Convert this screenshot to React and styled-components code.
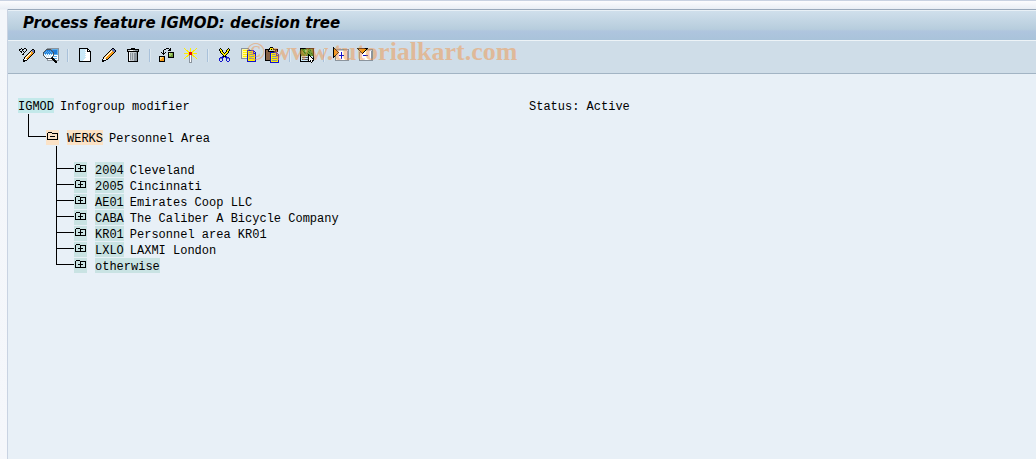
import React, { useState } from 'react';
import styled, { createGlobalStyle } from 'styled-components';

const GlobalStyle = createGlobalStyle`
  * {
    box-sizing: border-box;
  }

  body {
    margin: 0;
    background: #f5f7fb;
  }
`;

const Page = styled.div`
  min-height: 100vh;
  display: flex;
  flex-direction: column;
  padding: 8px 0 0 7px;
  border-top: 1px solid #c9d2e2;
  background: linear-gradient(#fcfcfe, #e9eef5 8px, #f3f6fa 9px, #f5f7fb);
`;

const Window = styled.main`
  flex: 1;
  display: flex;
  flex-direction: column;
  border-left: 1px solid #c9d3e2;
  background: #e8f0f7;
`;

const TitleBar = styled.header`
  height: 32px;
  padding: 0 15px;
  border-top: 1px solid #9aa9bb;
  border-bottom: 1px solid #edf3f7;
  box-shadow: inset 0 1px 0 #e8f0f6;
  background: linear-gradient(#d1e0ec, #b7cddd 64%, #afc5de 70%, #a9c3da);
`;

const Title = styled.h1`
  margin: 0;
  font-family: 'DejaVu Sans', sans-serif;
  font-size: 15px;
  font-style: italic;
  font-weight: 700;
  line-height: 27px;
  color: #000;
`;

const Toolbar = styled.div`
  position: relative;
  display: flex;
  align-items: center;
  height: 33px;
  padding: 0 7px 4px;
  border-bottom: 1px solid #a2b4c4;
  background: #cfdde8;
`;

const ToolButton = styled.button`
  width: 24px;
  height: 24px;
  padding: 4px;
  border: 0;
  background: none;
  cursor: pointer;

  &:hover {
    background: #dfeaf2;
  }
`;

const Separator = styled.span`
  width: 2px;
  height: 13px;
  margin: 0 4px;
  border-left: 1px solid #a9c1da;
  border-right: 1px solid #dde8f0;
`;

const Watermark = styled.span`
  position: absolute;
  top: -4px;
  left: 238px;
  font-family: 'Liberation Serif', serif;
  font-size: 26px;
  font-weight: 700;
  line-height: 30px;
  color: rgba(240, 150, 75, 0.5);
  pointer-events: none;
  white-space: nowrap;
`;

const Icon = styled.svg`
  display: block;
  width: 16px;
  height: 16px;
  shape-rendering: crispEdges;
`;

const Content = styled.section`
  padding: 24px 10px;
  font-family: 'Liberation Mono', monospace;
  font-size: 12px;
  line-height: 18px;
  color: #000;
`;

const Heading = styled.div`
  display: grid;
  grid-template-columns: minmax(200px, 511px) auto;
  justify-content: start;
  height: 16px;
`;

const Row = styled.div`
  display: flex;
  height: 16px;
  padding-left: ${props => props.$indent || 0}px;
  white-space: nowrap;
`;

const tones = {
  cyan: '#c3e9ea',
  peach: '#fbe2c6',
  green: '#c9e3e3',
};

const Tag = styled.span`
  height: 15px;
  margin-right: 6px;
  background: ${props => tones[props.$tone]};
`;

const FolderButton = styled.button`
  width: 13px;
  height: 15px;
  margin-right: 8px;
  padding: 0;
  border: 0;
  background: ${props => tones[props.$tone]};
  cursor: pointer;
`;

const FolderIcon = styled.svg`
  display: block;
  width: 13px;
  height: 15px;
  shape-rendering: crispEdges;
`;

const Stem = styled.div`
  height: 16px;
  margin-left: ${props => props.$indent}px;
  border-left: 1px solid #000;
`;

const Branch = styled.span`
  width: 18px;

  &::before {
    content: '';
    display: block;
    height: 6px;
    border-left: 1px solid #000;
    border-bottom: 1px solid #000;
  }

  &::after {
    content: '';
    display: block;
    height: 10px;
    border-left: 1px solid ${props => (props.$last ? 'transparent' : '#000')};
  }
`;

const palette = {
  K: '#000000',
  W: '#ffffff',
  G: '#8b949d',
  g: '#c3c9ce',
  D: '#4b5259',
  O: '#f59a16',
  o: '#ffd27a',
  Y: '#ffef00',
  y: '#fff9a0',
  R: '#e80c0c',
  B: '#1111cc',
  b: '#5dade9',
  S: '#1e7bd8',
  P: '#6b75b0',
  p: '#c9e8f8',
  E: '#6f9838',
  e: '#a5cc6b',
  F: '#447d14',
  M: '#866044',
};

const icons = {
  change: [
    '................',
    '..K..KK.........',
    'KK.KK..K.....KK.',
    'K..K...K....KPPK',
    '.KK.K.K....KoPPK',
    '..K..K....KoOOPK',
    '....K....KoWOOK.',
    '...KK...KoWOOK..',
    '.......KoWOOK...',
    '......KoWOOK....',
    '.....KoWOOK.....',
    '.....KWOOK......',
    '....KWWWK.......',
    '....KKKK........',
    '....KK..........',
    '................',
  ],
  find: [
    '................',
    '....GGGGGGGGGGGG',
    '...DDDDDGbbbbbbG',
    '..DSSSSSDSSSSSbG',
    '.DSbSbSbSDSSSSbG',
    'DSbSbSbSbSDSSSbG',
    'DbSbSbSbSbDSSSbG',
    'DWbWbWbWbWDbbbbG',
    'DpWpWpWpWWDWWWWG',
    '.DWpWpWpWDbbbbWG',
    '..DWWWWWDKWWWWWG',
    '...DDDDDKKKbbbWG',
    '....GWWWWKKKWWWG',
    '....GGGGGGKKKGGG',
    '...........KKK..',
    '............KK..',
  ],
  create: [
    '................',
    '..KKKKKKKKK.....',
    '..KppppppWKK....',
    '..KpppppWWKWK...',
    '..KppppppWKKKK..',
    '..KpppppWWWWWK..',
    '..KppppppWWWWK..',
    '..KpppppWWWWWK..',
    '..KppppppWWWWK..',
    '..KpppppWWWWWK..',
    '..KppppppWWWWK..',
    '..KpppppWWWWWK..',
    '..KppppWWWWWWK..',
    '..KpppWWWWWWWK..',
    '..KKKKKKKKKKKK..',
    '................',
  ],
  edit: [
    '................',
    '...........KK...',
    '..........KPPK..',
    '.........KoPPPK.',
    '........KoWOPPK.',
    '.......KoWOOOK..',
    '......KoWOOOK...',
    '.....KoWOOOK....',
    '....KoWOOOK.....',
    '...KoWOOOK......',
    '..KoWOOOK.......',
    '..KWoOOK........',
    '.KWWWKK.........',
    '.KKKK...........',
    '.KK.............',
    '................',
  ],
  remove: [
    '................',
    '......KKKK......',
    '..KKKKKKKKKKKK..',
    '..KggWWWggGGGK..',
    '..KKKKKKKKKKKK..',
    '...KWggggggGK...',
    '...KWGgGgGGGK...',
    '...KWGgGgGGGK...',
    '...KWGgGgGGGK...',
    '...KWGgGgGGGK...',
    '...KWGgGgGGGK...',
    '...KWGgGgGGGK...',
    '...KWGgGgGGGK...',
    '...KWggggGGGK...',
    '...KKKKKKKKKK...',
    '................',
  ],
  transfer: [
    '................',
    '.......KKK.K....',
    '.....KK...KK....',
    '....K....KKK....',
    '....K...........',
    '..K.K.K..KKKKKK.',
    '...KKK...KyeeEK.',
    '....K....KeeeEK.',
    '.........KeeEEK.',
    'KKKKKK...KEEEEK.',
    'KyooOK...KKKKKK.',
    'KooOOK..........',
    'KoOOOK..........',
    'KOOOOK..........',
    'KKKKKK..........',
    '................',
  ],
  activate: [
    '................',
    '.Y.....Y.....Y..',
    '..Y....Y....Y...',
    '...YY..Y..YY....',
    '....YY.Y.YY.....',
    '.....YRRRY......',
    '.YYYYYRRRYYYYY..',
    '.....YRRRY......',
    '....YYGWGYY.....',
    '...YY.GWG.YY....',
    '..Y...GWG...Y...',
    '.Y....GWG....Y..',
    '......GWG.......',
    '......GWG.......',
    '......GWG.......',
    '......GGG.......',
  ],
  cut: [
    '................',
    '...K.......K....',
    '..KYK.....KYK...',
    '..KYYK...KYYK...',
    '...KYK...KYK....',
    '...KYYK.KYYK....',
    '....KYYKYYK.....',
    '.....KYYYK......',
    '......KYK.......',
    '.....BKKKB......',
    '...BBBB.BBBB....',
    '..BPPB...BPPB...',
    '..B..B...B..B...',
    '..B..B...B..B...',
    '...BB.....BB....',
    '................',
  ],
  copy: [
    '................',
    'GGGGGGGG........',
    'GyyyyyyGG.......',
    'GyYYYYBBBBBBB...',
    'GyyyyyBYYYYYBB..',
    'GyYYYYBYGGGYBYB.',
    'GyyyyyBYYYYYBBB.',
    'GyYYYYBYGGGGGYB.',
    'GyyyyyBYYYYYYYB.',
    'GyYYYYBYGGGGGYB.',
    'GyyyyyBYYYYYYYB.',
    'GGGGGGBYGGGGGYB.',
    '......BYYYYYYYB.',
    '......BYYYYYYYB.',
    '......BBBBBBBBB.',
    '................',
  ],
  paste: [
    '.....KKK........',
    '....KYYYK.......',
    'KKKKKYKYKKKKK...',
    'KMMKggggggKMK...',
    'KMMKKKKKKKKMK...',
    'KMMMMBBBBBBB....',
    'KMMMMBYYYYYBB...',
    'KMMMMBYGGGYBYB..',
    'KMMMMBYYYYYBBB..',
    'KMMMMBYGGGGGYB..',
    'KMMMMBYYYYYYYB..',
    'KMMMMBYGGGGGYB..',
    'KMMMMBYYYYYYYB..',
    'KKKKKBYGGGGGYB..',
    '.....BYYYYYYYB..',
    '.....BBBBBBBBB..',
  ],
  select: [
    '................',
    '.KKKKKKKKKKKKKK.',
    '.KFFFEEEEFEEEFK.',
    '.KFFEEeeEEEFEFK.',
    '.KFEFEeeEFEEEFK.',
    '.KFEEFEEEEFEEFK.',
    '.KFFEEFEFEEEFFK.',
    '.KFFFEEEEKFEEFK.',
    '.KFEFFEFEKKFEFK.',
    '.KppppppgKWKppK.',
    '.KpDDDDDDKWWKpK.',
    '.KppppppgKWWWKK.',
    '.KpDDDDDDKWWWWK.',
    '.KppppppgKWKWKK.',
    '.KKKKKKKKKKKWK..',
    '............K...',
  ],
  expand: [
    'K...............',
    'KK..............',
    'KOKGGGGGGGGGGGGG',
    'KOOKgggggggggggG',
    'KOOOKWWWWWWWWWGG',
    'KOOOOKWWBWWWWWGG',
    'KOOOKWWWBWWWWWGG',
    'KOOKWWWWBWWWWWGG',
    'KOKWWWBBBBBWWWGG',
    'KKGWWWWWBWWWWWGG',
    'K.GWWWWWBWWWWWGG',
    '..GWWWWWBWWWWWGG',
    '..GWWWWWWWWWWWGG',
    '..GGGGGGGGGGGGGG',
    '................',
    '................',
  ],
  collapse: [
    '................',
    'KKKKKKKKKKK.....',
    '.KOOOOOOOKGGGGGG',
    '..KOOOOOKggggggG',
    '...KOOOKWWWWWWGG',
    '..GGKOKWWWWWWWGG',
    '..GWWKWWWWWWWWGG',
    '..GWWWWWWWWWWWGG',
    '..GWWWBBBBBWWWGG',
    '..GWWWWWWWWWWWGG',
    '..GWWWWWWWWWWWGG',
    '..GWWWWWWWWWWWGG',
    '..GWWWWWWWWWWWGG',
    '..GGGGGGGGGGGGGG',
    '................',
    '................',
  ],
};

const toolGroups = [
  [
    { icon: 'change', label: 'Display / Change' },
    { icon: 'find', label: 'Other feature' },
  ],
  [
    { icon: 'create', label: 'Create' },
    { icon: 'edit', label: 'Edit' },
    { icon: 'remove', label: 'Delete' },
  ],
  [
    { icon: 'transfer', label: 'Transfer' },
    { icon: 'activate', label: 'Activate' },
  ],
  [
    { icon: 'cut', label: 'Cut' },
    { icon: 'copy', label: 'Copy' },
    { icon: 'paste', label: 'Paste' },
  ],
  [{ icon: 'select', label: 'Select' }],
  [
    { icon: 'expand', label: 'Expand' },
    { icon: 'collapse', label: 'Collapse' },
  ],
];

const areas = [
  { code: '2004', name: 'Cleveland' },
  { code: '2005', name: 'Cincinnati' },
  { code: 'AE01', name: 'Emirates Coop LLC' },
  { code: 'CABA', name: 'The Caliber A Bicycle Company' },
  { code: 'KR01', name: 'Personnel area KR01' },
  { code: 'LXLO', name: 'LAXMI London' },
  { code: 'otherwise', name: '' },
];

function PixelIcon({ name }) {
  return (
    <Icon viewBox="0 0 16 16" aria-hidden="true">
      {icons[name].map((line, y) =>
        [...line].map((c, x) =>
          c === '.' ? null : (
            <rect key={`${x}-${y}`} x={x} y={y} width="1" height="1" fill={palette[c]} />
          )
        )
      )}
    </Icon>
  );
}

function Folder({ open, tone, label, onClick }) {
  return (
    <FolderButton $tone={tone} aria-label={label} aria-expanded={open} onClick={onClick}>
      <FolderIcon viewBox="0 0 13 15" fill="none" stroke="#000" aria-hidden="true">
        <path d="M1.5 9.5V3.5L2.5 2.5H5.5L6.5 3.5H11.5V9.5Z" />
        <path d={open ? 'M4 6.5H9' : 'M4 6.5H9M6.5 4V9'} />
      </FolderIcon>
    </FolderButton>
  );
}

function App() {
  const [open, setOpen] = useState(true);

  return (
    <>
      <GlobalStyle />
      <Page>
        <Window>
          <TitleBar>
            <Title>Process feature IGMOD: decision tree</Title>
          </TitleBar>
          <Toolbar role="toolbar">
            {toolGroups.map((group, i) => (
              <React.Fragment key={i}>
                {i > 0 && <Separator />}
                {group.map(tool => (
                  <ToolButton key={tool.icon} aria-label={tool.label} title={tool.label}>
                    <PixelIcon name={tool.icon} />
                  </ToolButton>
                ))}
              </React.Fragment>
            ))}
            <Watermark>© www.tutorialkart.com</Watermark>
          </Toolbar>

          <Content>
            <Heading>
              <Row>
                <Tag $tone="cyan">IGMOD</Tag>
                Infogroup modifier
              </Row>
              <span>Status: Active</span>
            </Heading>
            <Stem $indent={10} />
            <Row $indent={10}>
              <Branch $last />
              <Folder open={open} tone="peach" label="WERKS" onClick={() => setOpen(!open)} />
              <Tag $tone="peach">WERKS</Tag>
              Personnel Area
            </Row>
            {open && (
              <>
                <Stem $indent={38} />
                {areas.map((area, i) => (
                  <Row key={area.code} $indent={38}>
                    <Branch $last={i === areas.length - 1} />
                    <Folder open={false} tone="green" label={area.code} />
                    <Tag $tone="green">{area.code}</Tag>
                    {area.name}
                  </Row>
                ))}
              </>
            )}
          </Content>
        </Window>
      </Page>
    </>
  );
}

export default App;
